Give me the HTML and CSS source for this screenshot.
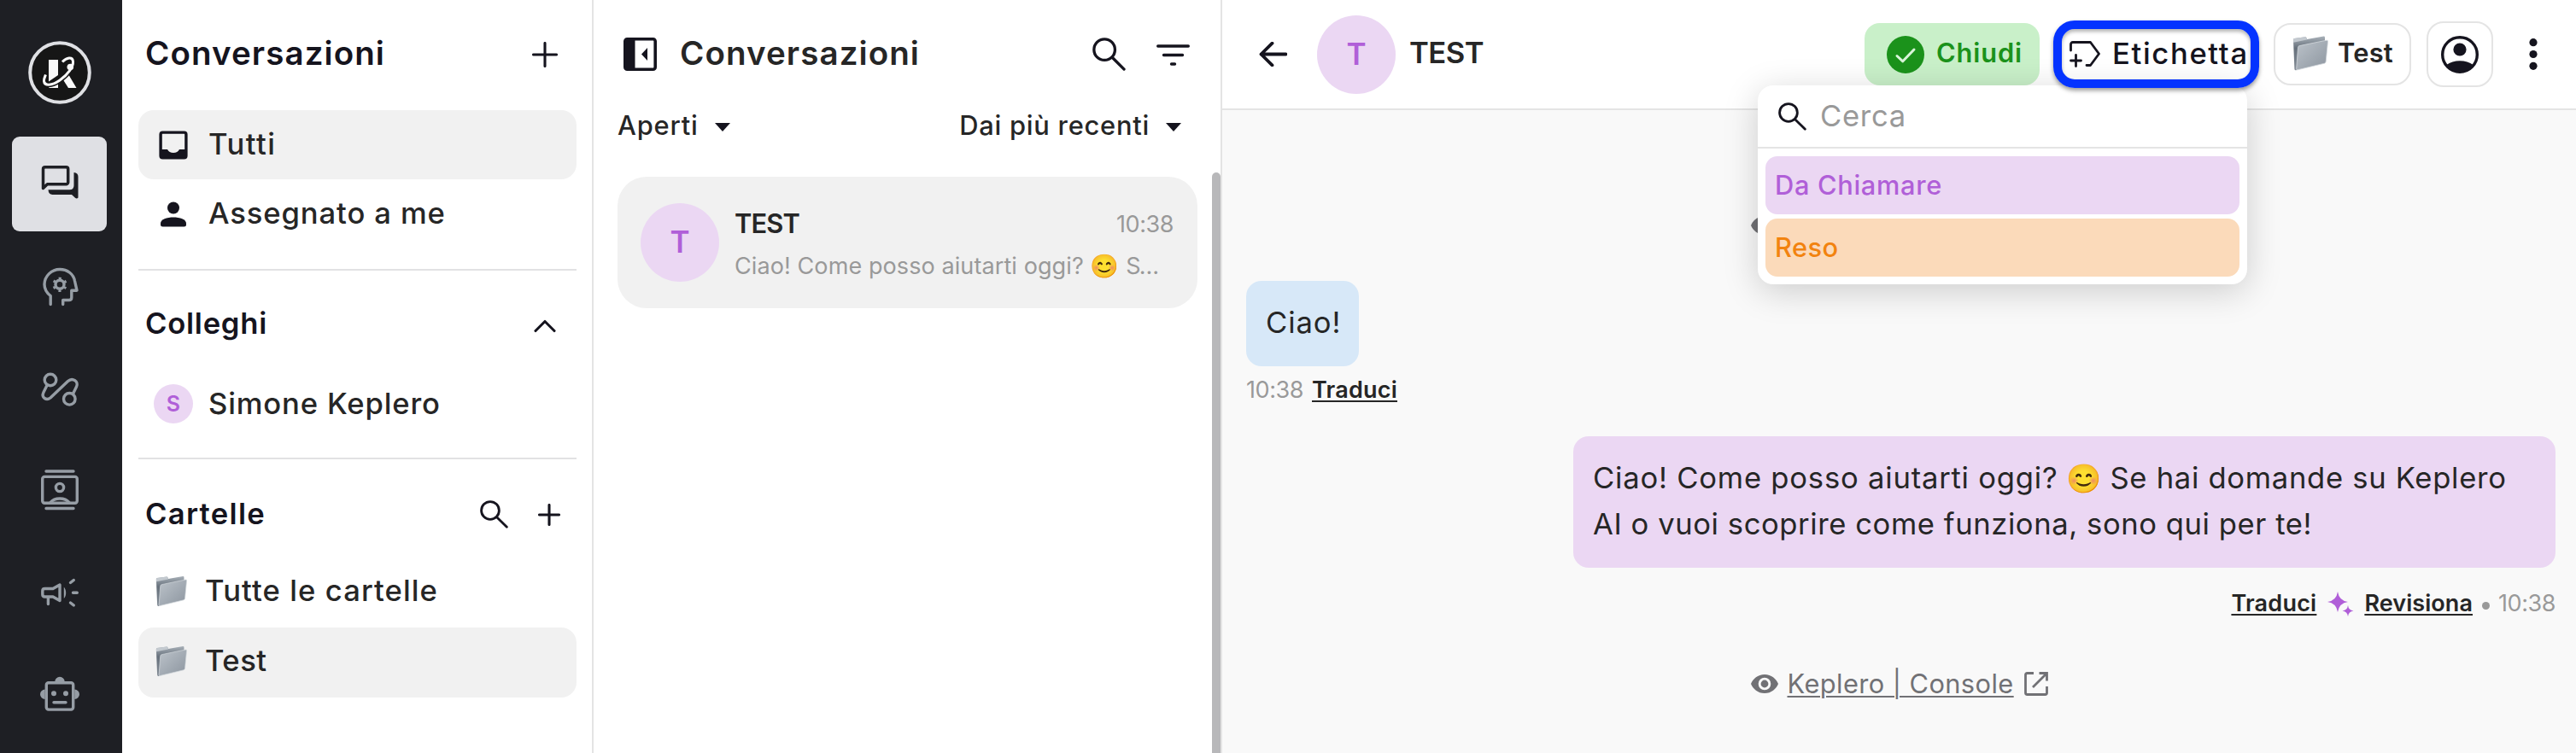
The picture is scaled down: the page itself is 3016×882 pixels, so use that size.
FILE: index.html
```html
<!DOCTYPE html>
<html lang="it">
<head>
<meta charset="utf-8">
<title>Conversazioni</title>
<link rel="stylesheet" href="styles.css">
</head>
<body>
<svg class="defs" aria-hidden="true">
  <defs>
    <linearGradient id="front" x1="0" y1="0" x2="1" y2="1"><stop offset="0" stop-color="#bcc3ca"/><stop offset="1" stop-color="#8c959f"/></linearGradient>
    <linearGradient id="back" x1="0" y1="0" x2="0" y2="1"><stop offset="0" stop-color="#a9b1b9"/><stop offset=".35" stop-color="#66707b"/><stop offset="1" stop-color="#848d97"/></linearGradient>
    <symbol id="folder" viewBox="0 0 42 41">
      <path d="M1 4.5Q1 3.3 2.2 3L15 1.2Q16 1 16.4 2.2L17 4 36.5.6Q38 .4 38 2V8L5 40Q2.6 41 2.4 38.8Z" fill="url(#back)"/>
      <path d="M1 4.5Q1 3.3 2.2 3L15 1.2Q16 1 16.4 2.2L17 4.6 1.1 7.8Z" fill="#c3c9cf"/>
      <path d="M8.2 11.6 40 5.2Q41.7 5 41.5 6.7L39.2 30Q39 31.7 37.5 32.2L6 39.8Q4.6 40.2 4.7 38.6L6.5 13.6Q6.7 12 8.2 11.6Z" fill="url(#front)" stroke="#d3d8dd" stroke-width=".8"/>
    </symbol>
    <symbol id="search" viewBox="0 0 40 40"><g fill="none" stroke="currentColor" stroke-width="3.4" stroke-linecap="round"><circle cx="14.5" cy="14.5" r="12.6"/><path d="M23.8 23.8 38 38"/></g></symbol>
    <symbol id="eye" viewBox="0 0 32 22"><path fill="currentColor" fill-rule="evenodd" d="M16 0C24 0 29.500 5 32 11 29.500 17 24 22 16 22S2.500 17 0 11C2.500 5 8 0 16 0ZM16 3.700A7.300 7.300 0 1 0 16 18.300 7.300 7.300 0 1 0 16 3.700ZM16 6.600A4.400 4.400 0 1 1 16 15.400 4.400 4.400 0 1 1 16 6.600Z"/></symbol>
  </defs>
</svg>

<nav class="rail">
  <svg class="logo" viewBox="-37 -37 74 74">
    <circle r="34.800" fill="#161616" stroke="#dfe0e4" stroke-width="4"/>
    <g fill="#fafafa"><path d="M-13-15H-2V3L-13 10.500Z"/><path d="M-13 17.500-2 12.500V18H-13Z"/><path d="M4 8.500 10 2 19.500 18H10Z"/></g>
    <path d="M3-12.500C8-18 15-19 15.500-13S10 2 0 9-18 15.500-18.500 10C-18.700 7-17.500 5-16.500 2.500" fill="none" stroke="#161616" stroke-width="6"/>
    <path d="M3-12.500C8-18 15-19 15.500-13S10 2 0 9-18 15.500-18.500 10C-18.700 7-17.500 5-16.500 2.500" fill="none" stroke="#fafafa" stroke-width="3"/>
    <circle cx="12.300" cy="-6.500" r="3.800" fill="#fafafa"/>
  </svg>
  <a class="tile active"><svg viewBox="-24 -24 48 48">
    <path d="M-19.500 4.500V-18a2.300 2.300 0 0 1 2.300-2.300H7.400A2.300 2.300 0 0 1 9.700-18V-2.500A2.300 2.300 0 0 1 7.400-.2H-14.600Z" fill="none" stroke="currentColor" stroke-width="3.500" stroke-linejoin="round"/>
    <path d="M16.500-14Q21.500-13.500 21.500-9V15.500Q20 17.500 18 15.800L14 12H-8.500Q-13.200 12-13.500 6.300H11.500Q16.500 6.300 16.500 1.300Z" fill="currentColor"/></svg></a>
  <a class="tile"><svg viewBox="-24 -24 48 48" class="line">
    <path d="M-10.800 21.500V11.500C-16 7.500-18 3-18-2A18 18 0 0 1 0-19.500C9-19.500 16-14 17.500-6L20 5.200H13.800V13.500q0 3-3 3H3.700V21.500"/>
    <circle cy="-1.700" r="5"/><circle cy="-1.700" r="7.300" stroke-width="2.600" stroke-dasharray="3 4.645" stroke-dashoffset="1.500" stroke-linecap="butt" transform="rotate(30 0 -1.700)"/></svg></a>
  <a class="tile"><svg viewBox="-24 -24 48 48" class="line">
    <circle cx="-11" cy="-10" r="6.800"/><circle cx="11.300" cy="12.300" r="6.800"/>
    <path d="M-14.800-4-19 4.500C-22 11-15.500 14.500-11 11L9.500-8.500C15-13.500 22.500-8 19.500-2L15.500 6.300"/></svg></a>
  <a class="tile"><svg viewBox="-24 -24 48 48" class="line">
    <path d="M-16-22H16M-16 21.500H16"/><rect x="-20.300" y="-15.600" width="40.600" height="30.800" rx="2.500"/><circle cy="-3" r="4.600"/><path d="M-11 14.500C-6 8.500 6 8.500 11 14.500"/></svg></a>
  <a class="tile"><svg viewBox="-24 -24 48 48" class="line">
    <path d="M-17.500-4.500H-8L0-9V9.500L-8 5H-17.500q-2.700 0-2.700-2.700V-1.800Q-20.200-4.500-17.500-4.500ZM-13.600 5V13.500M15.500.3H20.300M12.500-11.500 16.300-14.500M12.500 12 16.300 15"/><path d="M4.800-6.500C8-3 8 4 4.800 7Z" fill="currentColor" stroke="none"/></svg></a>
  <a class="tile"><svg viewBox="-24 -24 48 48" class="line">
    <rect x="-15.700" y="-13.300" width="31.400" height="31.400" rx="2.500"/><path d="M-7 9.700H7"/>
    <g fill="currentColor" stroke="none"><circle cx="-7" cy="-.8" r="3"/><circle cx="7" cy="-.8" r="3"/><path d="M-5.700-14.500a5.700 5.700 0 0 1 11.400 0ZM-17.300-5.500a5.700 5.700 0 0 0 0 11.400ZM17.300-5.500a5.700 5.700 0 0 1 0 11.400Z"/></g></svg></a>
</nav>

<aside class="folders">
  <header class="head head-main"><h1 class="t40 k1">Conversazioni</h1><svg class="ic30" viewBox="0 0 30 30"><path d="M15 1.500V28.500M1.500 15H28.500"/></svg></header>
  <div class="row selected"><svg class="ic46" viewBox="-23 -23 46 46"><rect x="-14.900" y="-14.900" width="29.800" height="29.800" rx="2.300" fill="none" stroke="#15141e" stroke-width="3.400"/><path d="M-15 5H-7Q-5 9 0 9T7 5H15V15H-15Z" fill="#15141e"/></svg><span class="t36 k2">Tutti</span></div>
  <div class="row"><svg class="ic46" viewBox="-23 -23 46 46"><g fill="#15141e"><circle cy="-7.500" r="7"/><path d="M-15 10.500C-15 1 15 1 15 10.500V12q0 2.500-2.500 2.500H-12.500Q-15 14.500-15 12Z"/></g></svg><span class="t36 k3">Assegnato a me</span></div>
  <hr class="rule">
  <header class="head head-sub"><h2 class="t36 k4">Colleghi</h2><svg class="chev" viewBox="0 0 26 16"><path d="M2 13.500 13 2.500 24 13.500"/></svg></header>
  <div class="row row-person"><span class="mini">S</span><span class="t36 k5">Simone Keplero</span></div>
  <hr class="rule">
  <header class="head head-sub head-last"><h2 class="t36 k6">Cartelle</h2><span class="tools"><svg class="s33"><use href="#search"/></svg><svg class="ic26" viewBox="0 0 26 26"><path d="M13 1.500V24.500M1.500 13H24.500"/></svg></span></header>
  <div class="row row-folder"><svg class="fold"><use href="#folder"/></svg><span class="t36 k7">Tutte le cartelle</span></div>
  <div class="row row-folder selected"><svg class="fold"><use href="#folder"/></svg><span class="t36 k8">Test</span></div>
</aside>

<section class="list">
  <header class="list-head"><svg class="panel" viewBox="0 0 39 39"><rect x="1.800" y="1.800" width="35.400" height="35.400" rx="2.500" fill="#fff" stroke="#15141e" stroke-width="3.600"/><path d="M2 2H13.500V37H2ZM28 12V27L21 19.500Z" fill="#15141e"/></svg><h1 class="t40 k9">Conversazioni</h1>
    <svg class="s40"><use href="#search"/></svg><svg class="filter" viewBox="0 0 39 26"><path d="M1.700 3H37.300M8.500 13.500H30.500M17.500 24H21.500"/></svg></header>
  <div class="sorts"><span class="t32 k10">Aperti</span><i class="caret"></i><span class="t32 k11">Dai più recenti</span><i class="caret"></i></div>
  <div class="body">
    <article class="card">
      <span class="avatar">T</span>
      <div class="info">
        <div class="line1"><strong class="t32 k12">TEST</strong><time class="t28 k13">10:38</time></div>
        <div class="t28 k14 preview">Ciao! Come posso aiutarti oggi? <span class="emo">😊</span> <span class="s">S…</span></div>
      </div>
    </article>
    <div class="thumb"></div>
  </div>
</section>

<main class="chat">
  <header class="bar">
    <svg class="arrow" viewBox="0 0 33 29"><path d="M31.500 14.500H2.500M15.500 1.700 2.500 14.500 15.500 27.300"/></svg>
    <span class="avatar">T</span><strong class="t36 k15">TEST</strong>
    <button class="close"><svg viewBox="0 0 44 44"><circle cx="22" cy="22" r="22" fill="#1b921b"/><path d="M12 23.500 18.800 29.800 32 16" fill="none" stroke="#d9f5d9" stroke-width="3" stroke-linecap="round" stroke-linejoin="round"/></svg><span class="t32 k16">Chiudi</span></button>
    <button class="tag"><svg viewBox="0 0 36 31"><path d="M1.500 11V4q0-2.500 2.500-2.500H24.500L34.500 15 24.500 28.500H20M7.500 16.500V29.500M1.500 23H13.500"/></svg><span class="t36 k17">Etichetta</span></button>
    <button class="box dir"><svg><use href="#folder"/></svg><span class="t32 k18">Test</span></button>
    <button class="box user"><svg viewBox="-22 -22 44 44"><circle r="20.300" fill="none" stroke="#15141e" stroke-width="3.400"/><circle cy="-6" r="7.600" fill="#15141e"/><path d="M-15.500 12C-8 5.500 8 5.500 15.500 12A20 20 0 0 1-15.500 12Z" fill="#15141e"/></svg></button>
    <svg class="dots" viewBox="0 0 10 37"><circle cx="5" cy="4.700" r="4.600"/><circle cx="5" cy="18.500" r="4.600"/><circle cx="5" cy="32.300" r="4.600"/></svg>
    <div class="popup">
      <label class="find"><svg class="s33"><use href="#search"/></svg><span class="t36 k19">Cerca</span></label>
      <div class="opt violet"><span class="t32 k20">Da Chiamare</span></div>
      <div class="opt orange"><span class="t32 k21">Reso</span></div>
    </div>
  </header>
  <div class="thread">
    <div class="page first"><svg class="eye"><use href="#eye"/></svg></div>
    <div class="bubble in t36 k22">Ciao!</div>
    <div class="meta"><time class="t28 k13">10:38</time><a class="t28 k23">Traduci</a></div>
    <div class="bubble out t36"><span class="k24">Ciao! Come posso aiutarti oggi?</span><span class="emo">😊</span><span class="k25">Se hai domande su Keplero</span><br><span class="k26">AI o vuoi scoprire come funziona, sono qui per te!</span></div>
    <div class="meta right"><a class="t28 k23">Traduci</a><svg class="spark" viewBox="0 0 31 29"><path d="M12 0Q13.500 10.500 24 12 13.500 13.500 12 24 10.500 13.500 0 12 10.500 10.500 12 0ZM24 16Q24.700 21.800 30.500 22.500 24.700 23.200 24 29 23.300 23.200 17.500 22.500 23.300 21.800 24 16Z" fill="#b05fd8"/></svg><a class="t28 k27">Revisiona</a><i class="dot"></i><time class="t28 k13">10:38</time></div>
    <div class="page last"><svg class="eye"><use href="#eye"/></svg><a class="t32 k28">Keplero | Console</a><svg class="ext" viewBox="0 0 28 28"><path d="M11 1.500H3.500q-2 0-2 2V24.500q0 2 2 2H24.500q2 0 2-2V17M17.500 1.500H26.500V10.500M26 2 10 18"/></svg></div>
  </div>
</main>
</body>
</html>
```
FILE: styles.css
```css
* { box-sizing: border-box; }
body { margin: 0; width: 3016px; height: 882px; display: flex; overflow: hidden; background: #fff; color: #262626; font-family: Inter, "Liberation Sans", "Noto Color Emoji", sans-serif; white-space: nowrap; }
h1, h2 { margin: 0; color: #15141e; font-weight: 600; }
button { margin: 0; padding: 0; border: 0; font-family: inherit; color: inherit; background: none; display: flex; align-items: center; flex: none; }
svg { display: block; flex: none; }
.defs { position: absolute; width: 0; height: 0; }

/* type sizes */
.t40 { font-size: 38.5px; line-height: 48px; font-weight: 600; }
.t36 { font-size: 34.6px; line-height: 44px; font-weight: 450; }
h2.t36 { font-weight: 600; }
.t32 { font-size: 30.8px; line-height: 40px; font-weight: 450; }
.t28 { font-size: 27px; line-height: 30px; font-weight: 380; }
h1, h2, .row .t36, button .t36, button .t32, .find .t36 { padding-bottom: 3px; }

/* tracking per label */
.k1, .k9 { letter-spacing: .0283em; }
.k2 { letter-spacing: .043em; }
.k3 { letter-spacing: .026em; }
.k4 { letter-spacing: .0219em; }
.k5 { letter-spacing: .025em; }
.k6 { letter-spacing: .0378em; }
.k7 { letter-spacing: .032em; }
.k8 { letter-spacing: .014em; }
.k10 { letter-spacing: .027em; }
.k11 { letter-spacing: .025em; }
.k12 { letter-spacing: -.0271em; font-weight: 600; }
.k13 { letter-spacing: -.0162em; color: #999; }
.k14 { letter-spacing: .0035em; }
.k15 { letter-spacing: -.0151em; font-weight: 600; }
.k16 { letter-spacing: .0284em; font-weight: 600; }
.k17 { letter-spacing: .048em; }
.k19 { letter-spacing: .021em; font-weight: 400; color: #999; }
.k20 { letter-spacing: .022em; }
.k21 { letter-spacing: .013em; }
.k18 { letter-spacing: .0086em; font-weight: 600; }
.bubble.k22 { letter-spacing: .026em; font-weight: 380; }
.k23 { letter-spacing: .008em; font-weight: 600; }
.k24 { letter-spacing: .023em; }
.k25 { letter-spacing: .0205em; }
.k26 { letter-spacing: .0168em; }
.k27 { letter-spacing: .0025em; font-weight: 600; }
.k28 { letter-spacing: .0135em; font-weight: 400; }

/* navigation rail */
.rail { width: 143px; flex: none; background: #1e1f24; display: flex; flex-direction: column; align-items: center; gap: 8.500px; padding: 48px 4px 0 0; }
.logo { width: 74px; height: 74px; margin-bottom: 29.500px; }
.tile { width: 111px; height: 111px; flex: none; border-radius: 9px; display: grid; place-items: center; color: #969da5; }
.tile svg { width: 48px; height: 48px; }
.tile.active { background: #dfe0e4; color: #1e1f24; }
.line { fill: none; stroke: currentColor; stroke-width: 3.400; stroke-linecap: round; stroke-linejoin: round; }

/* folder column */
.folders { width: 552px; flex: none; border-right: 2px solid #e4e4e4; padding: 0 18px 0 19px; }
.head { display: flex; align-items: center; justify-content: space-between; padding: 0 22px 0 8px; }
.head-main { height: 129px; padding-bottom: 2px; }
.head-sub { height: 125px; padding-right: 24px; }
.head-last { height: 115px; padding-right: 19px; padding-top: 14px; }
.tools { display: flex; align-items: center; gap: 35px; }
.ic30, .ic26, .chev { fill: none; stroke: #15141e; stroke-width: 3.100; stroke-linecap: round; stroke-linejoin: round; }
.ic30 { width: 30px; height: 30px; }
.ic26 { width: 26px; height: 26px; }
.chev { width: 26px; height: 16px; margin-top: 5px; }
.s33 { width: 33px; height: 33px; color: #15141e; }
.s40 { width: 39px; height: 39px; color: #15141e; }
.row { height: 81px; border-radius: 18px; display: flex; align-items: center; padding-left: 18px; }
.row .k2, .row .k3, .row .k5 { margin-left: 18px; }
.selected { background: #f1f1f1; }
.ic46 { width: 46px; height: 46px; }
.rule { margin: 24px 0 0; border: 0; height: 2px; background: #e2e2e3; }
.row-person { height: 62px; }
.row-person + .rule { margin-top: 32px; }
.mini { width: 46px; height: 46px; border-radius: 50%; background: #ebd7f3; color: #b05fd8; font: 600 25px/46px Inter, sans-serif; text-align: center; }
.fold { width: 37px; height: 37px; }
.row-folder { padding: 0 0 3px 20px; gap: 21px; height: 82px; }

/* conversation list */
.list { width: 736px; flex: none; border-right: 2px solid #e4e4e4; display: flex; flex-direction: column; }
.list-head { height: 127px; display: flex; align-items: center; padding: 0 36px 0 35px; }
.list-head h1 { margin: 0 auto 0 27px; color: #262626; }
.panel { width: 39px; height: 39px; }
.filter { width: 39px; height: 26px; margin-left: 36px; fill: none; stroke: #15141e; stroke-width: 3.400; stroke-linecap: round; }
.sorts { height: 40px; display: flex; align-items: center; padding: 0 46px 0 28px; }
.sorts .k11 { margin-left: auto; }
.caret { border: 9.500px solid transparent; border-top: 10px solid #15141e; border-bottom: 0; margin: 3px 0 0 19px; }
.body { flex: 1; margin-top: 35px; display: flex; }
.card { width: 679px; height: 154px; flex: none; margin: 5px 17px 0 28px; border-radius: 34px; background: #f1f1f1; display: flex; padding: 31px 28px 0 27px; }
.avatar { width: 92px; height: 92px; flex: none; border-radius: 50%; background: #ebd7f3; color: #b05fd8; font-size: 35px; font-weight: 600; line-height: 91px; text-align: center; }
.info { flex: 1; padding: 4px 0 0 18px; }
.line1 { display: flex; justify-content: space-between; align-items: center; height: 40px; }
.line1 time { padding-top: 1px; }
.preview { color: #999; margin-top: 14px; height: 32px; line-height: 32px; }
.emo { display: inline-block; font-family: "Noto Color Emoji"; letter-spacing: 0; text-align: center; color: #000; }
.preview .emo { width: 34px; margin: 0; font-size: 27px; line-height: 26px; }
.s { letter-spacing: -.07em; }
.thumb { width: 10px; border-radius: 5px 5px 0 0; background: #b8b8ba; }

/* chat header */
.chat { flex: 1; display: flex; flex-direction: column; }
.bar { position: relative; height: 129px; border-bottom: 2px solid #e4e4e4; display: flex; align-items: center; padding: 0 45px 0 43px; }
.arrow { width: 33px; height: 29px; margin-right: 35px; fill: none; stroke: #15141e; stroke-width: 3.800; stroke-linecap: round; stroke-linejoin: round; }
.k15 { margin: 0 auto 0 16px; padding-bottom: 5px; }
.close { width: 205px; height: 73px; border-radius: 18px; background: #c9f0c9; color: #1b921b; padding-left: 26px; gap: 14px; }
.close svg { width: 44px; height: 44px; }
.tag { position: relative; z-index: 2; width: 241px; height: 79px; margin: -1px 17px 0 16px; border: 10px solid #0433ff; border-radius: 25px; color: #15141e; padding-left: 9px; gap: 14px; box-shadow: 0 3px 5px rgba(0,0,0,.4), inset 0 3px 4px rgba(0,0,0,.3); }
.tag svg { width: 36px; height: 31px; fill: none; stroke: #15141e; stroke-width: 2.800; stroke-linecap: round; stroke-linejoin: round; }
.box { border: 2px solid #e4e4e4; border-radius: 20px; }
.dir { width: 161px; height: 73px; padding-left: 20px; gap: 11px; }
.dir svg { width: 42px; height: 41px; margin-bottom: 3px; }
.user { width: 78px; height: 77px; margin-left: 18px; justify-content: center; }
.user svg { width: 44px; height: 44px; }
.dots { width: 10px; height: 37px; margin-left: 42px; fill: #15141e; }
.popup { position: absolute; left: 627px; top: 100px; width: 573px; height: 233px; border-radius: 18px; background: #fff; box-shadow: 0 8px 40px rgba(0,0,0,.18); z-index: 1; }
.find { height: 74px; border-bottom: 2px solid #e4e4e4; display: flex; align-items: center; padding-left: 24px; gap: 16px; margin-bottom: 9px; }
.opt { height: 68px; margin: 0 9px 5px; border-radius: 14px; display: flex; align-items: center; padding-left: 11px; }
.violet { background: #ebd7f3; color: #b05fd8; }
.orange { background: #fbdaba; color: #f2830f; }

/* message thread */
.thread { flex: 1; background: #f9f9f9; padding: 115px 24px 0 28px; display: flex; flex-direction: column; }
.page { align-self: center; width: 348px; height: 40px; display: flex; align-items: center; color: #717175; margin-right: 4px; }
.eye { width: 32px; height: 22px; }
.page a { margin: 0 12px 0 11px; }
a { text-decoration: underline; text-decoration-thickness: 2px; text-underline-offset: 3px; }
.ext { width: 28px; height: 28px; fill: none; stroke: currentColor; stroke-width: 2.800; }
.bubble { border-radius: 18px; padding: 21px 0 0 23px; line-height: 54px; font-weight: 380; }
.in { width: 132px; height: 100px; margin-top: 45px; background: #d7e8f8; }
.out { align-self: flex-end; width: 1150px; height: 154px; margin-top: 39px; background: #ebd7f3; }
.out .emo { width: 42px; margin: 0 10px 0 9px; font-size: 33px; line-height: 40px; }
.meta { height: 30px; margin-top: 13px; display: flex; align-items: center; }
.meta a { margin-left: 10px; }
.right { align-self: flex-end; margin-top: 27px; }
.spark { width: 31px; height: 29px; margin-left: 13px; margin-right: 2px; }
.dot { width: 9px; height: 9px; border-radius: 50%; background: #999; margin: 4px 10px 0 11px; }
.last { margin-top: 59px; }
```
